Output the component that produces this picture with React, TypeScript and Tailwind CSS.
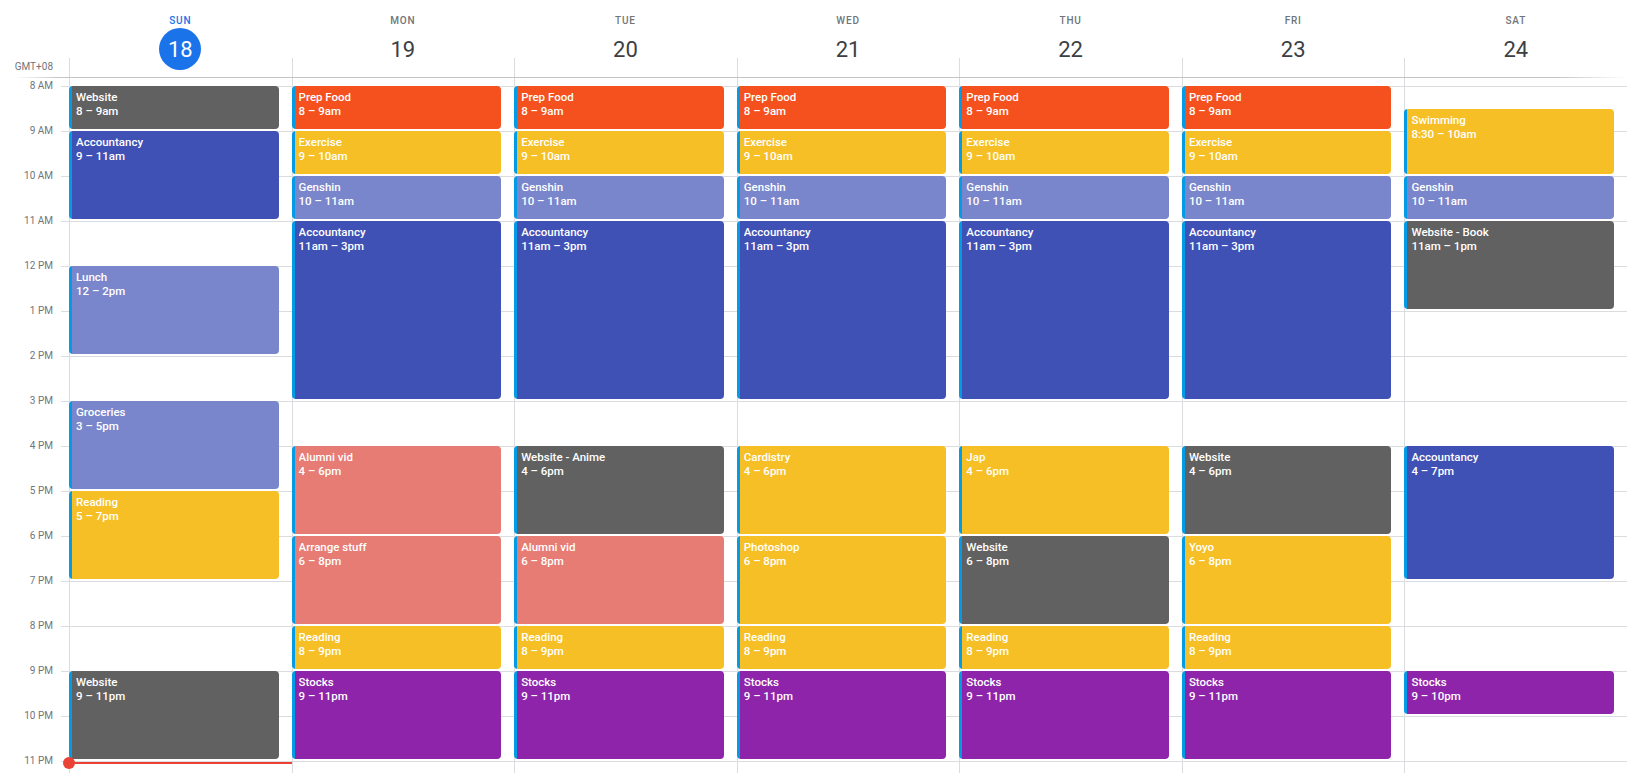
import React from "react";

const HOUR = 45;
const OFFSET = 8;

const COLORS = {
  grey: "bg-[#616161]",
  tomato: "bg-[#f4511e]",
  banana: "bg-[#f6bf26]",
  lavender: "bg-[#7986cb]",
  blueberry: "bg-[#3f51b5]",
  flamingo: "bg-[#e67c73]",
  grape: "bg-[#8e24aa]",
};

type Ev = { title: string; time: string; start: number; end: number; color: string };

const morning: Ev[] = [
  { title: "Prep Food", time: "8 – 9am", start: 8, end: 9, color: COLORS.tomato },
  { title: "Exercise", time: "9 – 10am", start: 9, end: 10, color: COLORS.banana },
  { title: "Genshin", time: "10 – 11am", start: 10, end: 11, color: COLORS.lavender },
  { title: "Accountancy", time: "11am – 3pm", start: 11, end: 15, color: COLORS.blueberry },
];

const evening: Ev[] = [
  { title: "Reading", time: "8 – 9pm", start: 20, end: 21, color: COLORS.banana },
  { title: "Stocks", time: "9 – 11pm", start: 21, end: 23, color: COLORS.grape },
];

const days: { name: string; date: number; today?: boolean; events: Ev[] }[] = [
  {
    name: "Sun",
    date: 18,
    today: true,
    events: [
      { title: "Website", time: "8 – 9am", start: 8, end: 9, color: COLORS.grey },
      { title: "Accountancy", time: "9 – 11am", start: 9, end: 11, color: COLORS.blueberry },
      { title: "Lunch", time: "12 – 2pm", start: 12, end: 14, color: COLORS.lavender },
      { title: "Groceries", time: "3 – 5pm", start: 15, end: 17, color: COLORS.lavender },
      { title: "Reading", time: "5 – 7pm", start: 17, end: 19, color: COLORS.banana },
      { title: "Website", time: "9 – 11pm", start: 21, end: 23, color: COLORS.grey },
    ],
  },
  {
    name: "Mon",
    date: 19,
    events: [
      ...morning,
      { title: "Alumni vid", time: "4 – 6pm", start: 16, end: 18, color: COLORS.flamingo },
      { title: "Arrange stuff", time: "6 – 8pm", start: 18, end: 20, color: COLORS.flamingo },
      ...evening,
    ],
  },
  {
    name: "Tue",
    date: 20,
    events: [
      ...morning,
      { title: "Website - Anime", time: "4 – 6pm", start: 16, end: 18, color: COLORS.grey },
      { title: "Alumni vid", time: "6 – 8pm", start: 18, end: 20, color: COLORS.flamingo },
      ...evening,
    ],
  },
  {
    name: "Wed",
    date: 21,
    events: [
      ...morning,
      { title: "Cardistry", time: "4 – 6pm", start: 16, end: 18, color: COLORS.banana },
      { title: "Photoshop", time: "6 – 8pm", start: 18, end: 20, color: COLORS.banana },
      ...evening,
    ],
  },
  {
    name: "Thu",
    date: 22,
    events: [
      ...morning,
      { title: "Jap", time: "4 – 6pm", start: 16, end: 18, color: COLORS.banana },
      { title: "Website", time: "6 – 8pm", start: 18, end: 20, color: COLORS.grey },
      ...evening,
    ],
  },
  {
    name: "Fri",
    date: 23,
    events: [
      ...morning,
      { title: "Website", time: "4 – 6pm", start: 16, end: 18, color: COLORS.grey },
      { title: "Yoyo", time: "6 – 8pm", start: 18, end: 20, color: COLORS.banana },
      ...evening,
    ],
  },
  {
    name: "Sat",
    date: 24,
    events: [
      { title: "Swimming", time: "8:30 – 10am", start: 8.5, end: 10, color: COLORS.banana },
      { title: "Genshin", time: "10 – 11am", start: 10, end: 11, color: COLORS.lavender },
      { title: "Website - Book", time: "11am – 1pm", start: 11, end: 13, color: COLORS.grey },
      { title: "Accountancy", time: "4 – 7pm", start: 16, end: 19, color: COLORS.blueberry },
      { title: "Stocks", time: "9 – 10pm", start: 21, end: 22, color: COLORS.grape },
    ],
  },
];

const hours = ["8 AM", "9 AM", "10 AM", "11 AM", "12 PM", "1 PM", "2 PM", "3 PM", "4 PM", "5 PM", "6 PM", "7 PM", "8 PM", "9 PM", "10 PM", "11 PM"];

function EventCard({ ev }: { ev: Ev }) {
  const top = OFFSET + (ev.start - 8) * HOUR;
  const height = (ev.end - ev.start) * HOUR - 2;
  return (
    <div className="absolute left-[-1px] right-[13px] flex overflow-hidden rounded-[4px]" style={{ top, height }}>
      <div className="w-[3px] shrink-0 bg-[#039be5]" />
      <div className={`flex-1 pl-[4px] pt-[4px] text-[11.5px] leading-[14px] text-white ${ev.color}`}>
        <div className="truncate font-medium">{ev.title}</div>
        <div className="font-medium">{ev.time}</div>
      </div>
    </div>
  );
}

export default function App() {
  return (
    <div className="h-[773px] w-[1627px] overflow-hidden bg-white font-['Roboto',_'Liberation_Sans',_sans-serif]">
      {/* header */}
      <div className="flex h-[77px]">
        <div className="flex w-[69px] shrink-0 flex-col justify-end pb-[3px] pr-[16px] text-right text-[10px] leading-[14px] text-[#70757a]">
          GMT+08
        </div>
        <div className="flex flex-1">
          {days.map((d) => (
            <div
              key={d.name}
              className="flex flex-1 flex-col items-center bg-[linear-gradient(#dadce0,#dadce0)] bg-[length:1px_19px] bg-[position:0_100%] bg-no-repeat pt-[14px]"
            >
              <div
                className={`text-[10px] font-medium uppercase leading-[14px] tracking-[0.8px] ${
                  d.today ? "text-[#1a73e8]" : "text-[#70757a]"
                }`}
              >
                {d.name}
              </div>
              {d.today ? (
                <div className="flex h-[42px] w-[42px] items-center justify-center rounded-full bg-[#1a73e8] text-[22px] text-white">
                  {d.date}
                </div>
              ) : (
                <div className="flex h-[42px] items-center text-[22px] text-[#3c4043]">{d.date}</div>
              )}
            </div>
          ))}
        </div>
      </div>
      <div className="h-px bg-[linear-gradient(to_right,transparent_14px,#c4c4c4_60px,#c4c4c4_calc(100%-70px),transparent)]" />

      {/* body */}
      <div className="flex h-[695px]">
        <div className="flex w-[69px] shrink-0 flex-col pt-px">
          {hours.map((h) => (
            <div key={h} className="flex h-[45px] shrink-0 items-start justify-end">
              <span className="pr-[8px] text-[10px] leading-[14px] text-[#70757a]">{h}</span>
              <div className="mt-[7px] h-px w-[8px] bg-[#dadce0]" />
            </div>
          ))}
        </div>
        <div className="flex flex-1 bg-[linear-gradient(#dadce0_1px,transparent_1px)] bg-[length:100%_45px] bg-[position:0_8px]">
          {days.map((d) => (
            <div key={d.name} className="relative flex-1 border-l border-[#dadce0]">
              {d.events.map((ev, i) => (
                <EventCard key={i} ev={ev} />
              ))}
              {d.today && (
                <div className="absolute left-[-1px] right-0 top-[684px] h-[2px] bg-[#ea4335]">
                  <div className="absolute left-[-6px] top-[-5px] h-[12px] w-[12px] rounded-full bg-[#ea4335]" />
                </div>
              )}
            </div>
          ))}
        </div>
      </div>
    </div>
  );
}
